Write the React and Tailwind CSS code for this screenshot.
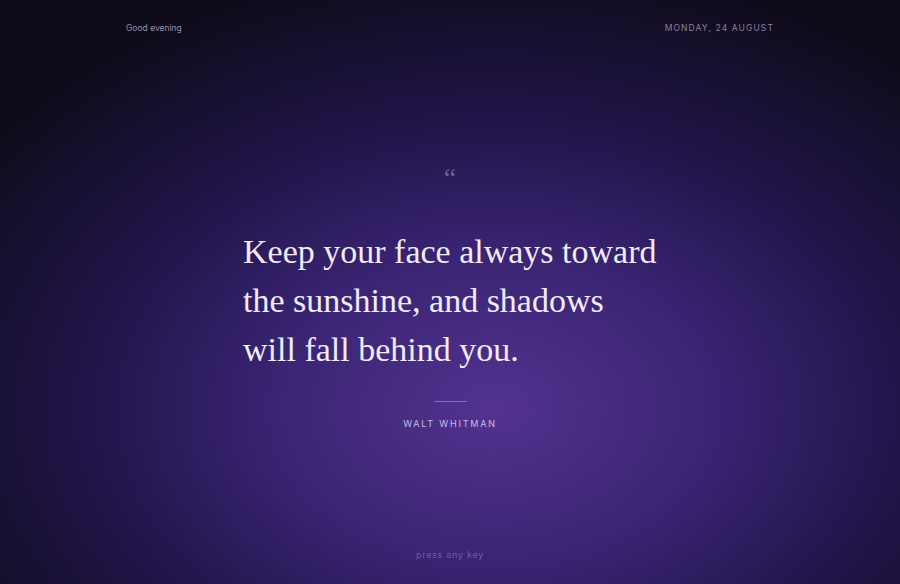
import React from 'react';

const App = () => {
  return (
    <div
      className="w-[900px] h-[584px] flex flex-col overflow-hidden"
      style={{
        background:
          'radial-gradient(ellipse 70% 76% at 55% 70%, #52338f 0%, #3a2473 35%, #21154a 64%, #0f0b1b 100%)',
      }}
    >
      <header className="flex justify-between items-center px-[126px] pt-[22px] font-['Inter',sans-serif] text-[8.5px]">
        <span className="text-[#9890a8]">Good evening</span>
        <span className="text-[#8a80a0] tracking-[0.13em] uppercase">Monday, 24 August</span>
      </header>

      <main className="flex-1 flex flex-col items-center">
        <div className="mt-[129px] font-['Liberation_Serif',serif] text-[28px] leading-none text-[#6f5e98]">“</div>
        <p className="mt-[35px] w-[420px] pl-[3px] font-['Liberation_Serif',serif] text-[34px] leading-[49px] text-[#f1ebfa]">
          Keep your face always toward the sunshine, and shadows will fall behind you.
        </p>
        <div className="mt-[27px] w-[33px] h-px bg-[#8271b4]" />
        <div className="mt-[15px] font-['Inter',sans-serif] text-[9px] tracking-[0.2em] text-[#c9bee8]">
          WALT WHITMAN
        </div>
      </main>

      <footer className="pb-[23px] text-center font-['Inter',sans-serif] text-[9px] tracking-[0.08em] text-[#6f609c]">
        press any key
      </footer>
    </div>
  );
};

export default App;
